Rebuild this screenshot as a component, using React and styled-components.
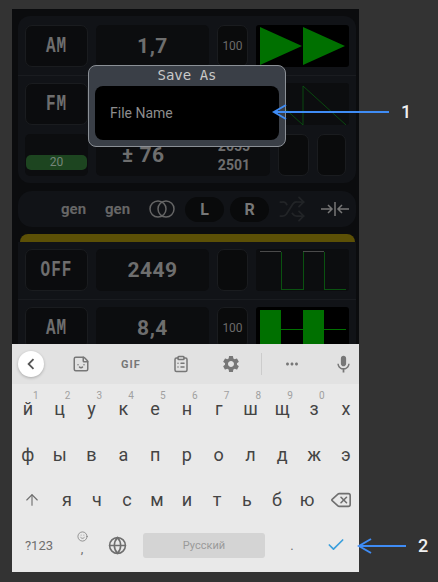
import React from "react"
import styled, { createGlobalStyle } from "styled-components"
import { ClipboardList, Delete, ArrowUp, Shuffle, Sticker, Smile, Globe, Check } from "lucide-react"
import { MdSettings, MdMic, MdMoreHoriz, MdKeyboardArrowLeft } from "react-icons/md"

const GlobalStyle = createGlobalStyle`
  html, body {
    margin: 0;
    padding: 0;
    background: #333333;
  }
  * {
    box-sizing: border-box;
  }
`

const Stage = styled.div`
  position: relative;
  width: 438px;
  height: 582px;
  padding: 9px 79px 10px 12px;
  background: #333333;
  font-family: Roboto, "Liberation Sans", sans-serif;
  overflow: hidden;
`

const Phone = styled.div`
  position: relative;
  height: 563px;
  padding: 7px 3px 0 6px;
  background: #0b0c0e;
  overflow: hidden;
`

const Panel = styled.section`
  padding: ${(p) => (p.$flat ? "7px" : "9px")} 7px 7px;
  background: #111317;
  border-radius: ${(p) => (p.$flat ? "0" : "12px")};
`

const Row = styled.div`
  display: grid;
  grid-template-columns: 63px 113px 31px 93px;
  gap: 8px;
  height: 42px;
  margin-bottom: ${(p) => (p.$divided ? "8px" : "9px")};
  &:last-child {
    margin-bottom: 0;
  }
`

const Divider = styled.div`
  height: 1px;
  margin: 0 -7px 7px;
  background: #1a1c20;
`

const BottomRow = styled(Row)`
  grid-template-columns: 63px 174px 31px 29px;
  column-gap: 8px;
`

const ModeButton = styled.div`
  display: flex;
  align-items: center;
  justify-content: center;
  background: #0b0c0e;
  border: 1px solid #1a1c1f;
  border-radius: 7px;
  color: #6e6e6e;
`

const ModeLabel = styled.span`
  font-family: "Liberation Mono", monospace;
  font-size: 16px;
  font-weight: 700;
  letter-spacing: 1px;
  transform: scaleY(1.4);
`

const ValueBox = styled.div`
  display: flex;
  align-items: center;
  justify-content: ${(p) => (p.$split ? "space-between" : "center")};
  padding: ${(p) => (p.$split ? "0 20px 0 26px" : "0")};
  background: #0c0d0f;
  border-radius: 5px;
  color: #6e6e6e;
  font-size: 21px;
  font-weight: 700;
  letter-spacing: 0.5px;
`

const StackedNumbers = styled.div`
  display: flex;
  flex-direction: column;
  align-items: center;
  gap: 5px;
  font-size: 14px;
  letter-spacing: 0;
  line-height: 14px;
`

const SmallBox = styled.div`
  display: flex;
  align-items: center;
  justify-content: center;
  background: #0a0b0c;
  border: 1px solid #1a1c1f;
  border-radius: 7px;
  color: #6a6a6a;
  font-size: 12px;
`

const LevelBox = styled.div`
  display: flex;
  align-items: flex-end;
  padding: 0 1px 6px;
  background: #0c0d0f;
  border-radius: 5px;
`

const LevelBar = styled.div`
  width: 100%;
  height: 15px;
  background: #1d4520;
  border-radius: 5px;
  color: #75857a;
  font-size: 12px;
  line-height: 15px;
  text-align: center;
`

const Graph = styled.svg`
  display: block;
  width: 93px;
  height: 42px;
  background: ${(p) => p.$bg || "#000"};
  border-radius: 3px;
`

const PillBar = styled.div`
  display: flex;
  align-items: center;
  justify-content: flex-end;
  height: 36px;
  margin-top: 8px;
  padding-right: 7px;
  background: #111317;
  border-radius: 14px;
  color: #666;
`

const GenLabel = styled.span`
  width: 29px;
  margin-right: ${(p) => p.$gap}px;
  font-size: 15px;
  font-weight: 700;
`

const Channel = styled.span`
  display: flex;
  align-items: center;
  justify-content: center;
  width: 39px;
  height: 25px;
  margin-right: ${(p) => p.$gap}px;
  background: #090a0b;
  border-radius: 13px;
  color: #777;
  font-size: 16px;
  font-weight: 700;
`

const IconSlot = styled.svg`
  display: block;
  margin-right: ${(p) => p.$gap || 0}px;
`

const ShuffleIcon = styled(Shuffle)`
  margin-right: 15px;
  color: #222427;
`

const YellowCap = styled.div`
  height: 8px;
  margin: 7px 1px 0 2px;
  background: #5c5006;
  border-radius: 9px 9px 0 0;
`

const Dialog = styled.div`
  position: absolute;
  left: 88px;
  top: 65px;
  width: 198px;
  height: 82px;
  padding: 0 6px;
  background: #3a3f47;
  border: 1px solid #8b9096;
  border-radius: 8px;
`

const DialogTitle = styled.div`
  height: 20px;
  color: #c9c9c9;
  font-family: "DejaVu Sans Mono", monospace;
  font-size: 14px;
  line-height: 19px;
  text-align: center;
`

const NameField = styled.div`
  display: flex;
  align-items: center;
  height: 54px;
  padding-left: 15px;
  background: #000;
  border-radius: 8px;
  color: #8d8d8d;
  font-size: 14px;
`

const Keyboard = styled.div`
  position: absolute;
  left: 0;
  right: 0;
  bottom: 0;
  height: 228px;
  background: #e9e9e9;
  color: #444;
`

const Toolbar = styled.div`
  display: grid;
  grid-template-columns: 44px 50px 50px 50px 50px 10px 52px 41px;
  align-items: center;
  justify-items: center;
  height: 40px;
  background: #e2e2e2;
  color: #777;
`

const BackButton = styled.div`
  display: flex;
  align-items: center;
  justify-content: center;
  width: 26px;
  height: 26px;
  margin-left: -6px;
  background: #fff;
  border-radius: 50%;
  box-shadow: 0 1px 3px rgba(0, 0, 0, 0.25);
  color: #555;
`

const GifLabel = styled.span`
  font-size: 11px;
  font-weight: 700;
  letter-spacing: 1px;
`

const ToolDivider = styled.div`
  width: 1px;
  height: 22px;
  background: #cccccc;
`

const MicSlot = styled.div`
  display: flex;
  padding-left: 9px;
`

const KeyRows = styled.div`
  padding-top: 2px;
`

const KeyRow = styled.div`
  display: grid;
  grid-template-columns: ${(p) => p.$columns};
  height: 45.5px;
`

const Key = styled.div`
  position: relative;
  display: flex;
  align-items: center;
  justify-content: center;
  font-size: 18px;
  color: ${(p) => (p.$muted ? "#6f6f6f" : "#444")};
`

const KeyHint = styled.sup`
  position: absolute;
  top: 5px;
  left: 50%;
  margin-left: 5px;
  color: #a0a0a0;
  font-size: 10px;
  line-height: 10px;
`

const SmallKey = styled(Key)`
  font-size: 13px;
`

const EmojiKey = styled(Key)`
  flex-direction: column;
  font-size: 13px;
  line-height: 8px;
  padding-bottom: 6px;
  gap: 3px;
`

const SpaceBar = styled.div`
  display: flex;
  align-items: center;
  justify-content: center;
  height: 25px;
  margin: 10px 7px 0;
  background: #d4d4d4;
  border-radius: 3px;
  color: #9a9a9a;
  font-size: 11px;
`

const Callout = styled.svg`
  position: absolute;
  left: ${(p) => p.$x}px;
  top: ${(p) => p.$y}px;
`

const CalloutNumber = styled.span`
  position: absolute;
  left: ${(p) => p.$x}px;
  top: ${(p) => p.$y}px;
  color: #f0f0f0;
  font-size: 18px;
  font-weight: 500;
  line-height: 20px;
`

const Watermark = styled.span`
  position: absolute;
  left: ${(p) => p.$x}px;
  top: ${(p) => p.$y}px;
  color: ${(p) => (p.$light ? "rgba(200, 215, 235, 0.018)" : "rgba(110, 125, 150, 0.025)")};
  font-family: "Liberation Sans", sans-serif;
  font-size: 26px;
  font-weight: 700;
  white-space: nowrap;
  pointer-events: none;
`

const topKeys = [
  ["й", 1], ["ц", 2], ["у", 3], ["к", 4], ["е", 5], ["н", 6],
  ["г", 7], ["ш", 8], ["щ", 9], ["з", 0], ["х"],
]
const homeKeys = ["ф", "ы", "в", "а", "п", "р", "о", "л", "д", "ж", "э"]
const lowerKeys = ["я", "ч", "с", "м", "и", "т", "ь", "б", "ю"]

const watermarks = [
  { x: 388, y: 22, text: "Made", light: true },
  { x: 388, y: 52, text: "Dr.E", light: true },
  { x: 258, y: 406, text: "Made with" },
  { x: 38, y: 436, text: "Dr.Explain" },
  { x: 28, y: 462, text: "TRIAL" },
  { x: 286, y: 462, text: "TRIAL" },
  { x: 134, y: 532, text: "Made with" },
]

const Circles = () => (
  <IconSlot $gap={10} width="26" height="18" viewBox="0 0 26 18" fill="none" stroke="#666" strokeWidth="1.5">
    <circle cx="9" cy="9" r="8" />
    <circle cx="17" cy="9" r="8" />
  </IconSlot>
)

const MergeIcon = () => (
  <IconSlot width="28" height="16" viewBox="0 0 28 16" fill="none" stroke="#777" strokeWidth="1.5">
    <path d="M0 8h11M7 4l4 4-4 4M28 8H17M21 4l-4 4 4 4M14 1v14" />
  </IconSlot>
)

const App = () => {
  return (
    <Stage>
      <GlobalStyle />
      <Phone>
        <Panel>
          <Row $divided>
            <ModeButton><ModeLabel>AM</ModeLabel></ModeButton>
            <ValueBox>1,7</ValueBox>
            <SmallBox>100</SmallBox>
            <Graph viewBox="0 0 93 42">
              <path d="M4 2 L46 21 L4 40 Z M47 2 L89 21 L47 40 Z" fill="#007000" />
            </Graph>
          </Row>
          <Divider />
          <Row>
            <ModeButton><ModeLabel>FM</ModeLabel></ModeButton>
            <ValueBox />
            <SmallBox />
            <Graph viewBox="0 0 93 42" $bg="#0c0d0f">
              <path d="M4 3 L47 42 V3 L90 42" fill="none" stroke="#0a5c10" strokeWidth="0.75" />
            </Graph>
          </Row>
          <BottomRow>
            <LevelBox>
              <LevelBar>20</LevelBar>
            </LevelBox>
            <ValueBox $split>
              <span>± 76</span>
              <StackedNumbers>
                <span>2055</span>
                <span>2501</span>
              </StackedNumbers>
            </ValueBox>
            <SmallBox />
            <SmallBox />
          </BottomRow>
        </Panel>

        <PillBar>
          <GenLabel $gap={15}>gen</GenLabel>
          <GenLabel $gap={15}>gen</GenLabel>
          <Circles />
          <Channel $gap={6}>L</Channel>
          <Channel $gap={9}>R</Channel>
          <ShuffleIcon size={28} strokeWidth={1.5} />
          <MergeIcon />
        </PillBar>

        <YellowCap />
        <Panel $flat>
          <Row $divided>
            <ModeButton><ModeLabel>OFF</ModeLabel></ModeButton>
            <ValueBox>2449</ValueBox>
            <SmallBox />
            <Graph viewBox="0 0 93 42" $bg="#0c0d0f" shapeRendering="crispEdges">
              <path d="M4 2.5 H25 M47 2.5 H68" fill="none" stroke="#4a4a4a" strokeWidth="1" />
              <path d="M25.5 2.5 V40.5 H47.5 V2.5 M68.5 2.5 V40.5 H90" fill="none" stroke="#0a5210" strokeWidth="1" />
            </Graph>
          </Row>
          <Divider />
          <Row>
            <ModeButton><ModeLabel>AM</ModeLabel></ModeButton>
            <ValueBox>8,4</ValueBox>
            <SmallBox>100</SmallBox>
            <Graph viewBox="0 0 93 42" shapeRendering="crispEdges">
              <path d="M4 3 H25 V41 H4 Z M47 3 H68 V41 H47 Z" fill="#007000" />
              <path d="M25 22.5 H47 M68 22.5 H90" stroke="#007000" strokeWidth="1" />
            </Graph>
          </Row>
        </Panel>

        <Keyboard>
          <Toolbar>
            <BackButton>
              <MdKeyboardArrowLeft size={22} />
            </BackButton>
            <Sticker size={18} strokeWidth={2} />
            <GifLabel>GIF</GifLabel>
            <ClipboardList size={18} strokeWidth={2} />
            <MdSettings size={20} />
            <ToolDivider />
            <MdMoreHoriz size={18} />
            <MicSlot>
              <MdMic size={21} />
            </MicSlot>
          </Toolbar>
          <KeyRows>
            <KeyRow $columns="repeat(11, 31.8px)">
              {topKeys.map(([letter, hint]) => (
                <Key key={letter}>
                  {letter}
                  {hint !== undefined && <KeyHint>{hint}</KeyHint>}
                </Key>
              ))}
            </KeyRow>
            <KeyRow $columns="repeat(11, 31.8px)">
              {homeKeys.map((letter) => (
                <Key key={letter}>{letter}</Key>
              ))}
            </KeyRow>
            <KeyRow $columns="40px repeat(9, 30px) 37px">
              <Key $muted>
                <ArrowUp size={18} strokeWidth={1.5} />
              </Key>
              {lowerKeys.map((letter) => (
                <Key key={letter}>{letter}</Key>
              ))}
              <Key $muted>
                <Delete size={22} strokeWidth={1.75} />
              </Key>
            </KeyRow>
            <KeyRow $columns="54px 32px 38px 136px 40px 47px">
              <SmallKey $muted>?123</SmallKey>
              <EmojiKey $muted>
                <Smile size={11} strokeWidth={1.5} />
                <span>,</span>
              </EmojiKey>
              <Key $muted>
                <Globe size={19} strokeWidth={2} />
              </Key>
              <SpaceBar>Русский</SpaceBar>
              <SmallKey $muted>.</SmallKey>
              <Key>
                <Check size={20} color="#3a9fdc" strokeWidth={2} />
              </Key>
            </KeyRow>
          </KeyRows>
        </Keyboard>
      </Phone>

      <Dialog>
        <DialogTitle>Save As</DialogTitle>
        <NameField>File Name</NameField>
      </Dialog>

      <Callout $x={270} $y={103} width="120" height="18" viewBox="0 0 120 18" fill="none" stroke="#3f8cf5" strokeWidth="2">
        <path d="M119 9H4M16 2L4 9l12 7" />
      </Callout>
      <CalloutNumber $x={401} $y={102}>1</CalloutNumber>

      <Callout $x={355} $y={537} width="52" height="18" viewBox="0 0 52 18" fill="none" stroke="#3f8cf5" strokeWidth="2">
        <path d="M51 9H4M16 2L4 9l12 7" />
      </Callout>
      <CalloutNumber $x={418} $y={536}>2</CalloutNumber>

      {watermarks.map((mark) => (
        <Watermark key={`${mark.x}-${mark.y}`} $x={mark.x} $y={mark.y} $light={mark.light}>
          {mark.text}
        </Watermark>
      ))}
    </Stage>
  )
}

export default App
